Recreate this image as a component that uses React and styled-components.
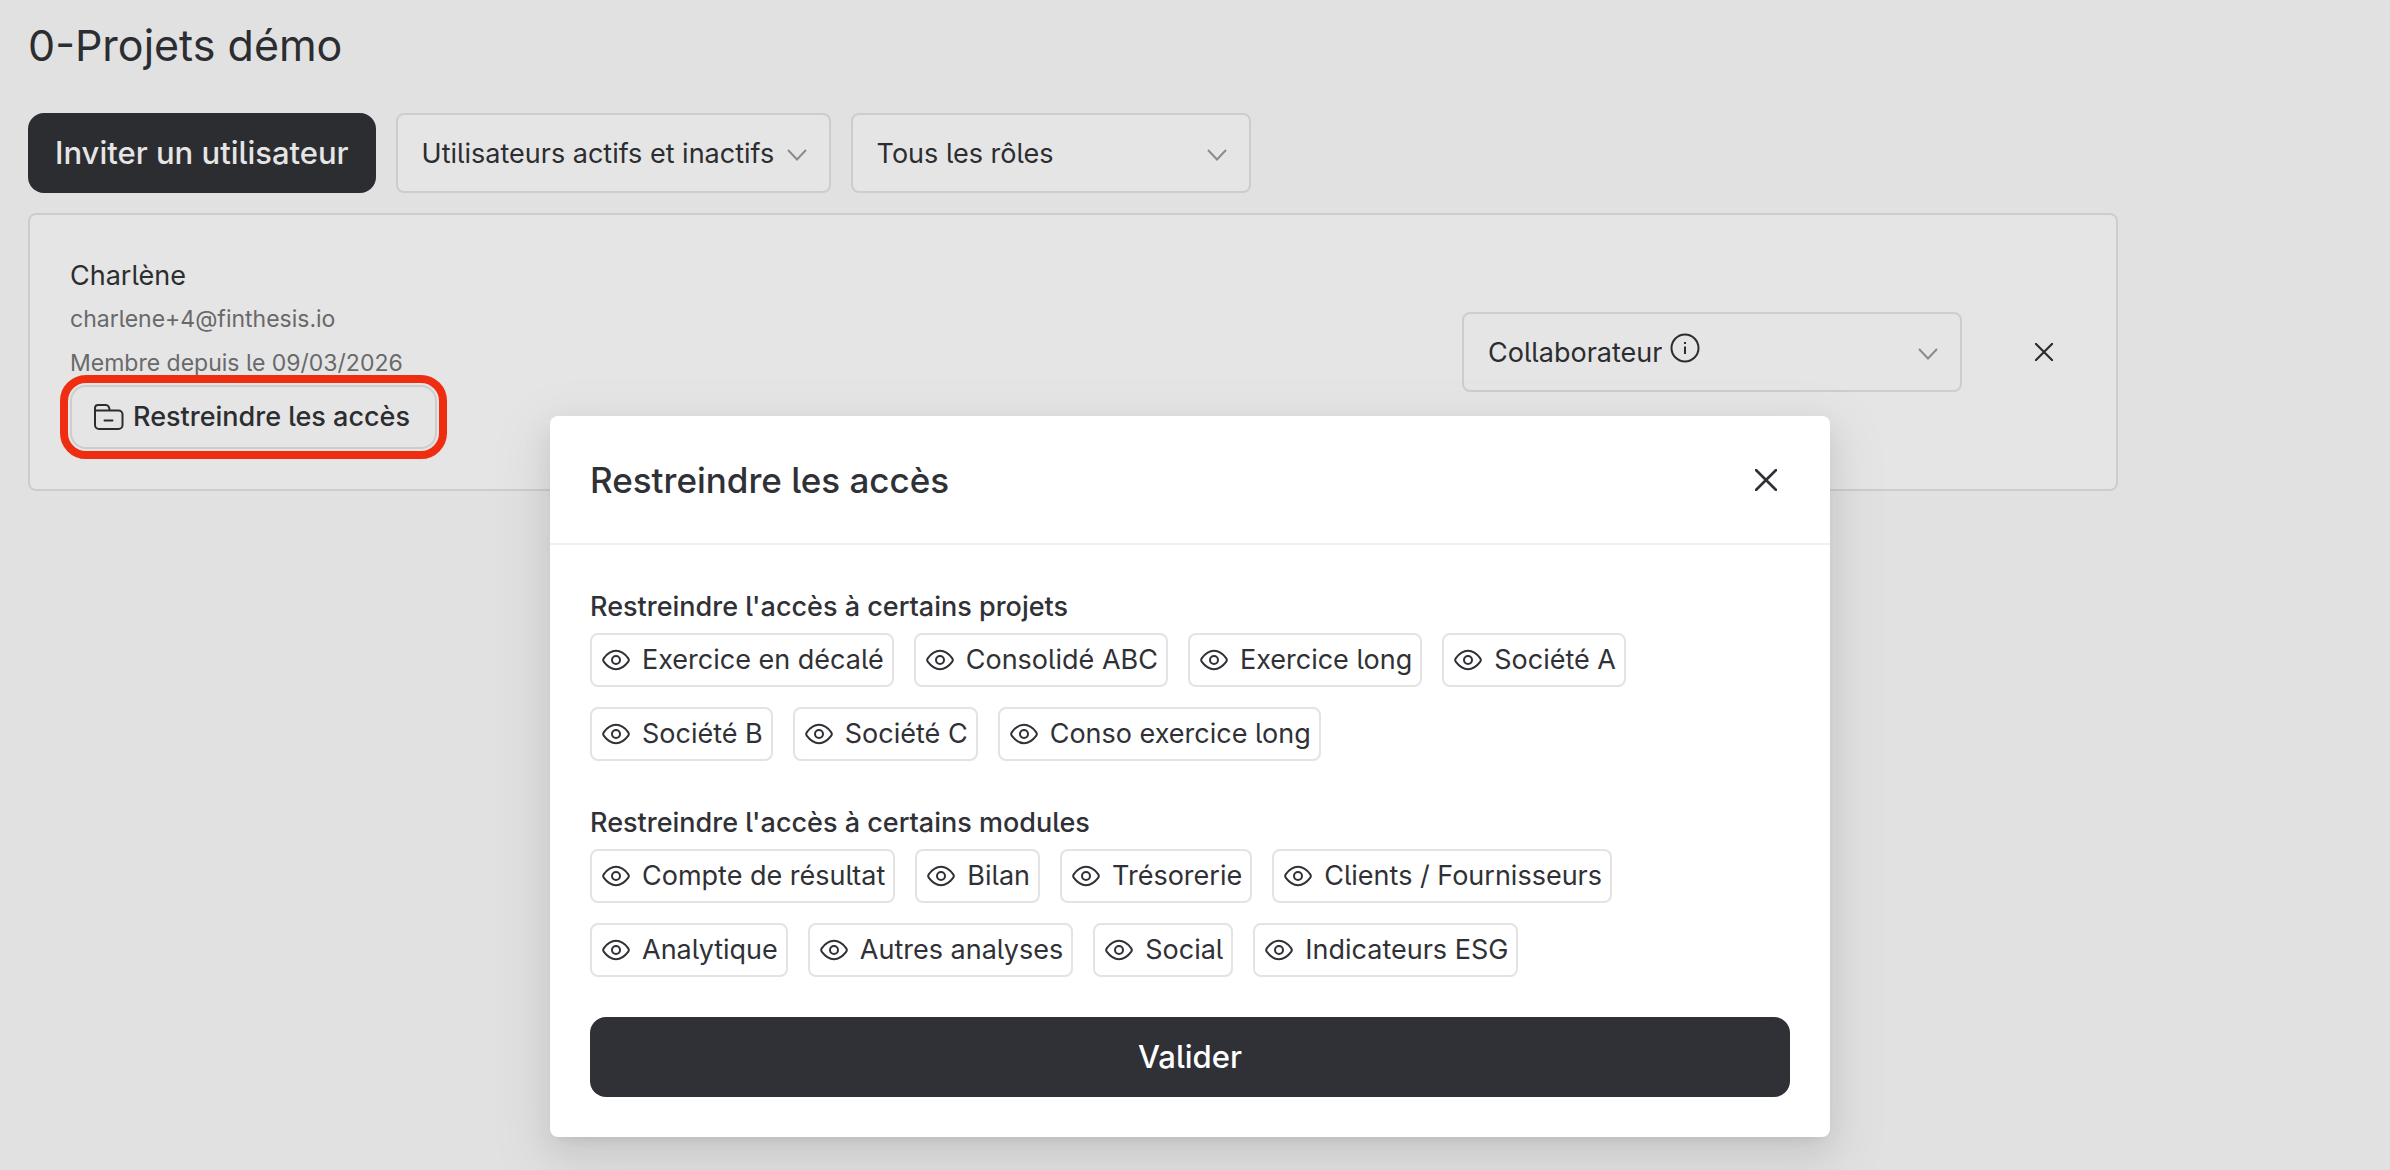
import React from "react";

// Styles
import styled, { createGlobalStyle } from "styled-components";

const ink = "#303136";
const inkDimmed = "#2c2d31";
const textMuted = "#68696b";
const pageBackground = "#e1e1e1";
const cardBackground = "#e5e5e5";
const lineDimmed = "#cdcdcd";

const projects = [
  "Exercice en décalé",
  "Consolidé ABC",
  "Exercice long",
  "Société A",
  "Société B",
  "Société C",
  "Conso exercice long",
];

const modules = [
  "Compte de résultat",
  "Bilan",
  "Trésorerie",
  "Clients / Fournisseurs",
  "Analytique",
  "Autres analyses",
  "Social",
  "Indicateurs ESG",
];

const EyeIcon = () => (
  <svg width="28" height="22" viewBox="0 0 28 22" fill="none" stroke="currentColor" strokeWidth="2" aria-hidden="true">
    <path d="M1.900 12.900C1 11.700 1 10.300 1.900 9.100C4.600 5.500 8.800 1.800 14 1.800S23.400 5.500 26.100 9.100C27 10.300 27 11.700 26.100 12.900C23.400 16.500 19.200 20.200 14 20.200S4.600 16.500 1.900 12.900Z" />
    <circle cx="14" cy="11" r="4" />
  </svg>
);

const FolderIcon = () => (
  <svg width="30" height="28" viewBox="0 0 30 28" fill="none" stroke="currentColor" strokeWidth="2" strokeLinecap="round" strokeLinejoin="round" aria-hidden="true">
    <path d="M1 7.500H24.500A4 4 0 0 1 28.500 11.500V22A4 4 0 0 1 24.500 26H5A4 4 0 0 1 1 22V4.500A3 3 0 0 1 4 2H12C13.500 2 14.200 2.600 14.800 4L16 7.500" />
    <path d="M10.500 17.500H18.500" />
  </svg>
);

const InfoIcon = () => (
  <svg width="30" height="30" viewBox="0 0 30 30" fill="none" stroke="currentColor" strokeWidth="2" aria-hidden="true">
    <circle cx="15" cy="15" r="13.500" />
    <path d="M15 13.500V21M15 9V11" />
  </svg>
);

const ChevronIcon = () => (
  <svg width="20" height="12" viewBox="0 0 20 12" fill="none" stroke="#8b8b8c" strokeWidth="2" aria-hidden="true">
    <path d="M1 1L10 10.500L19 1" />
  </svg>
);

const CloseIcon = ({ size }) => (
  <svg width={size} height={size} viewBox="0 0 22 22" fill="none" stroke="currentColor" strokeWidth="2.700" aria-hidden="true">
    <path d="M0 0L22 22M22 0L0 22" />
  </svg>
);

const SelectField = ({ label, options, width, info }) => (
  <SelectBox $width={width}>
    <Select aria-label={label}>
      {options.map((option) => (
        <option key={option}>{option}</option>
      ))}
    </Select>
    {info && (
      <InfoWrap>
        <InfoIcon />
      </InfoWrap>
    )}
    <ChevronWrap>
      <ChevronIcon />
    </ChevronWrap>
  </SelectBox>
);

const AccessGroup = ({ title, items }) => (
  <section>
    <GroupTitle>{title}</GroupTitle>
    <ChipList>
      {items.map((item) => (
        <Chip type="button" key={item}>
          <EyeIcon />
          {item}
        </Chip>
      ))}
    </ChipList>
  </section>
);

const App = () => {
  return (
    <>
      <GlobalStyle />
      <Page>
        <PageTitle>0-Projets démo</PageTitle>
        <Toolbar>
          <PrimaryButton type="button" $dimmed>
            Inviter un utilisateur
          </PrimaryButton>
          <SelectField
            label="Statut"
            width={435}
            options={["Utilisateurs actifs et inactifs", "Utilisateurs actifs"]}
          />
          <SelectField
            label="Rôle"
            width={400}
            options={["Tous les rôles", "Collaborateur"]}
          />
        </Toolbar>
        <UserCard>
          <UserInfo>
            <UserName>Charlène</UserName>
            <UserDetail>charlene+4@finthesis.io</UserDetail>
            <UserDetail>Membre depuis le 09/03/2026</UserDetail>
            <RestrictButton type="button">
              <FolderIcon />
              Restreindre les accès
            </RestrictButton>
          </UserInfo>
          <UserActions>
            <SelectField
              label="Rôle de Charlène"
              width={500}
              options={["Collaborateur", "Administrateur"]}
              info
            />
            <IconButton type="button" aria-label="Supprimer">
              <CloseIcon size={18} />
            </IconButton>
          </UserActions>
        </UserCard>
      </Page>
      <Overlay>
        <Modal role="dialog" aria-labelledby="modal-title">
          <ModalHeader>
            <ModalTitle id="modal-title">Restreindre les accès</ModalTitle>
            <IconButton type="button" aria-label="Fermer">
              <CloseIcon size={22} />
            </IconButton>
          </ModalHeader>
          <ModalBody>
            <AccessGroup
              title="Restreindre l'accès à certains projets"
              items={projects}
            />
            <AccessGroup
              title="Restreindre l'accès à certains modules"
              items={modules}
            />
            <PrimaryButton type="button">Valider</PrimaryButton>
          </ModalBody>
        </Modal>
      </Overlay>
    </>
  );
};

// Styles
const GlobalStyle = createGlobalStyle`
  *, *::before, *::after {
    box-sizing: border-box;
  }
  body {
    margin: 0;
    background: ${pageBackground};
    color: ${inkDimmed};
    font-family: Inter, "Liberation Sans", sans-serif;
    font-feature-settings: "cv05";
    font-size: 27px;
    line-height: 44px;
  }
  button, select {
    font: inherit;
    font-feature-settings: inherit;
    color: inherit;
    margin: 0;
  }
`;

const Page = styled.main`
  padding: 17px 272px 0 28px;
`;

const PageTitle = styled.h1`
  margin: 0 0 40px;
  font-size: 43px;
  font-weight: 400;
  line-height: 56px;
`;

const Toolbar = styled.div`
  display: flex;
  gap: 20px;
  margin-bottom: 20px;
`;

const PrimaryButton = styled.button`
  height: 80px;
  padding: 0 27px;
  border: none;
  border-radius: 16px;
  background: ${({ $dimmed }) => ($dimmed ? inkDimmed : ink)};
  color: ${({ $dimmed }) => ($dimmed ? cardBackground : "#ffffff")};
  font-size: 31px;
  font-weight: 500;
  white-space: nowrap;
`;

const SelectBox = styled.div`
  display: flex;
  align-items: center;
  width: ${({ $width }) => $width}px;
  height: 80px;
  padding: 0 22px 0 24px;
  border: 2px solid ${lineDimmed};
  border-radius: 8px;
  background: ${cardBackground};
`;

const Select = styled.select`
  appearance: none;
  field-sizing: content;
  padding: 2px 0 0;
  border: none;
  background: transparent;
`;

const InfoWrap = styled.span`
  display: flex;
  padding: 0 0 8px 8px;
`;

const ChevronWrap = styled.span`
  display: flex;
  margin-left: auto;
  padding-top: 4px;
`;

const UserCard = styled.section`
  display: flex;
  justify-content: space-between;
  align-items: center;
  padding: 40px;
  border: 2px solid ${lineDimmed};
  border-radius: 8px;
  background: ${cardBackground};
`;

const UserInfo = styled.div`
  display: flex;
  flex-direction: column;
  align-items: flex-start;
`;

const UserName = styled.div`
  line-height: 42px;
`;

const UserDetail = styled.div`
  color: ${textMuted};
  font-size: 23px;
  line-height: 44px;
`;

const RestrictButton = styled.button`
  display: flex;
  align-items: center;
  gap: 9px;
  height: 64px;
  padding: 0 25px 0 22px;
  border: 2px solid ${lineDimmed};
  border-radius: 16px;
  outline: 8px solid #ef2d10;
  outline-offset: 2px;
  background: transparent;
  font-weight: 500;
  white-space: nowrap;
`;

const UserActions = styled.div`
  display: flex;
  align-items: center;
  gap: 50px;
`;

const IconButton = styled.button`
  display: flex;
  align-items: center;
  justify-content: center;
  width: 64px;
  height: 64px;
  padding: 0;
  border: none;
  background: transparent;
`;

const Overlay = styled.div`
  position: absolute;
  top: 416px;
  left: 0;
  right: 10px;
  display: flex;
  justify-content: center;
`;

const Modal = styled.section`
  width: 1280px;
  border-radius: 8px;
  background: #ffffff;
  color: ${ink};
  box-shadow:
    0 12px 32px rgba(0, 0, 0, 0.08),
    0 6px 12px -8px rgba(0, 0, 0, 0.12),
    0 18px 56px 16px rgba(0, 0, 0, 0.05);
`;

const ModalHeader = styled.header`
  display: flex;
  align-items: center;
  justify-content: space-between;
  height: 129px;
  padding: 0 32px 0 40px;
  border-bottom: 2px solid #f0f0f0;
`;

const ModalTitle = styled.h2`
  margin: 0;
  font-size: 35px;
  font-weight: 500;
`;

const ModalBody = styled.div`
  display: flex;
  flex-direction: column;
  gap: 40px;
  padding: 40px;
`;

const GroupTitle = styled.h3`
  margin: 0 0 4px;
  font-size: 27px;
  font-weight: 500;
  line-height: 44px;
`;

const ChipList = styled.div`
  display: flex;
  flex-wrap: wrap;
  gap: 20px;
`;

const Chip = styled.button`
  display: flex;
  align-items: center;
  gap: 12px;
  height: 54px;
  padding: 0 8px 0 10px;
  border: 2px solid #e3e3e3;
  border-radius: 8px;
  background: #ffffff;
  white-space: nowrap;
`;

export default App;
